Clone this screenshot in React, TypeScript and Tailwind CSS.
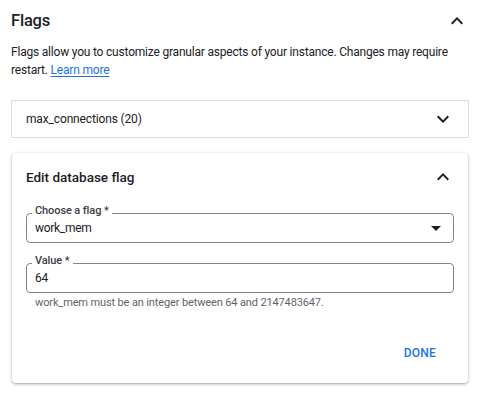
import React from "react";

function ChevronUp() {
  return (
    <svg width="24" height="24" viewBox="0 0 24 24" className="block">
      <path d="M12 8l-6 6 1.41 1.41L12 10.83l4.59 4.58L18 14z" fill="#202124" />
    </svg>
  );
}

function ChevronDown() {
  return (
    <svg width="24" height="24" viewBox="0 0 24 24" className="block">
      <path d="M16.59 8.59L12 13.17 7.41 8.59 6 10l6 6 6-6z" fill="#202124" />
    </svg>
  );
}

function DropArrow() {
  return (
    <svg width="24" height="24" viewBox="0 0 24 24" className="block">
      <path d="M7 10l5 5 5-5z" fill="#202124" />
    </svg>
  );
}

function OutlinedField({ label, value, trailing }: { label: string; value: string; trailing?: React.ReactNode }) {
  return (
    <div className="relative h-[30px] rounded-[4px] border border-[#80868b] flex items-center pl-[8px] pr-[5px]">
      <span className="absolute left-[5px] top-[-10px] bg-white px-[3px] text-[11px] leading-[14px] font-medium tracking-[-0.1px] text-[#3c4043]">
        {label}
      </span>
      <span className="flex-1 text-[12px] leading-[16px] tracking-[-0.3px] text-[#202124]">{value}</span>
      {trailing}
    </div>
  );
}

export default function App() {
  return (
    <div
      className="w-[482px] h-[398px] bg-white pl-[11px] pr-[13px] text-[#202124]"
      style={{ fontFamily: "Roboto, 'Noto Sans', sans-serif" }}
    >
      <div className="flex items-center justify-between pt-[9px] h-[33px]">
        <h2 className="text-[16.5px] leading-[24px] font-medium tracking-[-0.2px]">Flags</h2>
        <ChevronUp />
      </div>
      <p className="mt-[10px] text-[12px] leading-[18px] tracking-[-0.2px] text-[#202124]">
        Flags allow you to customize granular aspects of your instance. Changes may require restart.{" "}
        <a className="text-[#1a73e8] underline underline-offset-[2px]">Learn more</a>
      </p>
      <div className="mt-[21px] h-[38px] border border-[#dadce0] flex items-center justify-between pl-[14px] pr-[13px]">
        <span className="text-[12px] tracking-[-0.15px]">max_connections (20)</span>
        <ChevronDown />
      </div>
      <div className="mt-[15px] mx-[1px] h-[230px] rounded-[4px] bg-white px-[14px] shadow-[0_1px_2px_0_rgba(60,64,67,0.3),0_1px_3px_1px_rgba(60,64,67,0.15)]">
        <div className="h-[48px] flex items-center justify-between">
          <span className="text-[13.5px] font-medium">Edit database flag</span>
          <div className="mr-[-1px]">
            <ChevronUp />
          </div>
        </div>
        <div className="mt-[12px]">
          <OutlinedField label="Choose a flag *" value="work_mem" trailing={<DropArrow />} />
        </div>
        <div className="mt-[20px]">
          <OutlinedField label="Value *" value="64" />
        </div>
        <p className="mt-[3px] pl-[9px] text-[11px] leading-[14px] tracking-[-0.13px] text-[#5f6368]">
          work_mem must be an integer between 64 and 2147483647.
        </p>
        <div className="mt-[25px] flex justify-end pr-[10px]">
          <button className="h-[36px] px-[8px] text-[12px] font-medium text-[#1a73e8] tracking-[0.2px]">DONE</button>
        </div>
      </div>
    </div>
  );
}
